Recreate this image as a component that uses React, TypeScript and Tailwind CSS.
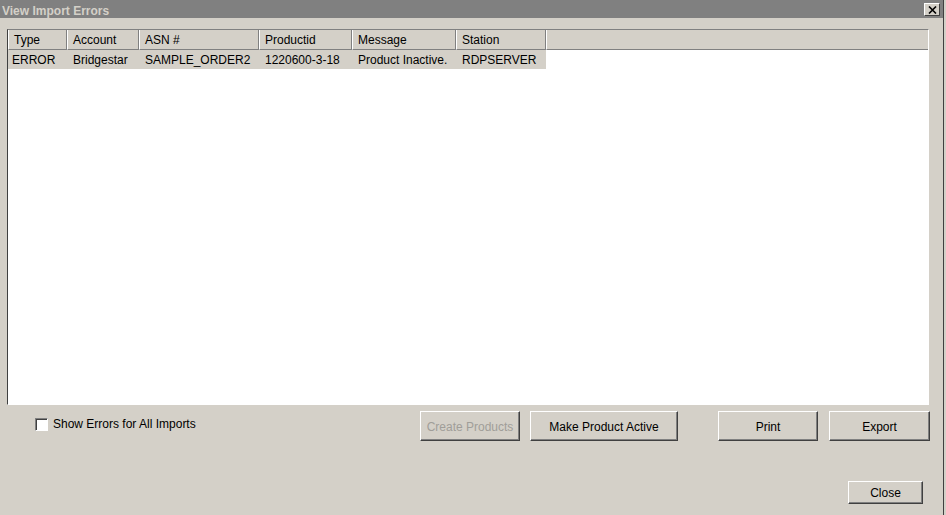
import React from "react";

const columns = [
  { name: "Type", w: "w-[59px]", pad: "pl-[4px]", value: "ERROR" },
  { name: "Account", w: "w-[72px]", pad: "pl-[6px]", value: "Bridgestar" },
  { name: "ASN #", w: "w-[120px]", pad: "pl-[6px]", value: "SAMPLE_ORDER2" },
  { name: "Productid", w: "w-[93px]", pad: "pl-[6px]", value: "1220600-3-18" },
  { name: "Message", w: "w-[104px]", pad: "pl-[6px]", value: "Product Inactive." },
  { name: "Station", w: "w-[90px]", pad: "pl-[6px]", value: "RDPSERVER" },
];

const Btn = ({
  label,
  w,
  h = "h-[30px]",
  disabled = false,
}: {
  label: string;
  w: string;
  h?: string;
  disabled?: boolean;
}) => (
  <button
    className={`${w} ${h} flex items-center justify-center pt-[1px] border border-t-white border-l-white border-b-[#404040] border-r-[#404040] bg-[#d4d0c8] shadow-[inset_-1px_-1px_0_#808080] text-[12px] ${
      disabled ? "text-[#a09e99]" : "text-black"
    }`}
  >
    {label}
  </button>
);

const App = () => {
  return (
    <div className="flex w-[946px] h-[515px] bg-[#d4d0c8] font-['Liberation_Sans',Arial,sans-serif] text-[12px] text-black overflow-hidden">
      <div className="flex flex-col w-[943px] h-full">
        {/* title bar */}
        <div className="flex items-center justify-between h-[18px] bg-[#808080] pl-[2px] pr-[3px]">
          <span className="font-bold text-[12px] text-[#d4d0c8] leading-none pt-[3px]">
            View Import Errors
          </span>
          <div className="flex items-center justify-center w-[16px] h-[13px] mt-[1px] bg-[#d4d0c8] border border-t-white border-l-white border-b-[#404040] border-r-[#404040]">
            <svg width="9" height="8" viewBox="0 0 9 8">
              <path d="M1 0.5 L8 7.5 M8 0.5 L1 7.5" stroke="#000" strokeWidth="1.6" />
            </svg>
          </div>
        </div>

        {/* table panel */}
        <div className="ml-[7px] mt-[11px] w-[922px] h-[376px] border border-t-[#808080] border-l-[#404040] border-b-white border-r-white bg-white flex flex-col">
          <div className="flex h-[20px] bg-[#d4d0c8]">
            {columns.map((c) => (
              <div
                key={c.name}
                className={`${c.w} flex items-center pl-[5px] border-l border-l-white border-r border-r-[#808080] border-b border-b-[#808080]`}
              >
                {c.name}
              </div>
            ))}
            <div className="flex-1 border-l border-l-white border-b border-b-[#808080]" />
          </div>
          <div className="flex h-[19px]">
            {columns.map((c) => (
              <div
                key={c.name}
                className={`${c.w} ${c.pad} flex items-center bg-[#d4d0c8] whitespace-nowrap`}
              >
                {c.value}
              </div>
            ))}
          </div>
        </div>

        {/* action row */}
        <div className="flex items-start mt-[6px] pl-[7px]">
          <div className="w-[413px] flex items-center pl-[28px] pt-[4px]">
            <div className="w-[13px] h-[13px] bg-white border border-t-[#808080] border-l-[#808080] border-b-white border-r-white shadow-[inset_1px_1px_0_#404040]" />
            <span className="ml-[5px]">Show Errors for All Imports</span>
          </div>
          <Btn label="Create Products" w="w-[100px]" disabled />
          <div className="ml-[10px]">
            <Btn label="Make Product Active" w="w-[148px]" />
          </div>
          <div className="ml-[40px]">
            <Btn label="Print" w="w-[100px]" />
          </div>
          <div className="ml-[11px]">
            <Btn label="Export" w="w-[101px]" />
          </div>
        </div>

        {/* close row */}
        <div className="flex justify-end mt-[40px] pr-[20px]">
          <Btn label="Close" w="w-[75px]" h="h-[23px]" />
        </div>
      </div>
      <div className="w-[1px] h-full bg-[#404040]" />
    </div>
  );
};

export default App;
